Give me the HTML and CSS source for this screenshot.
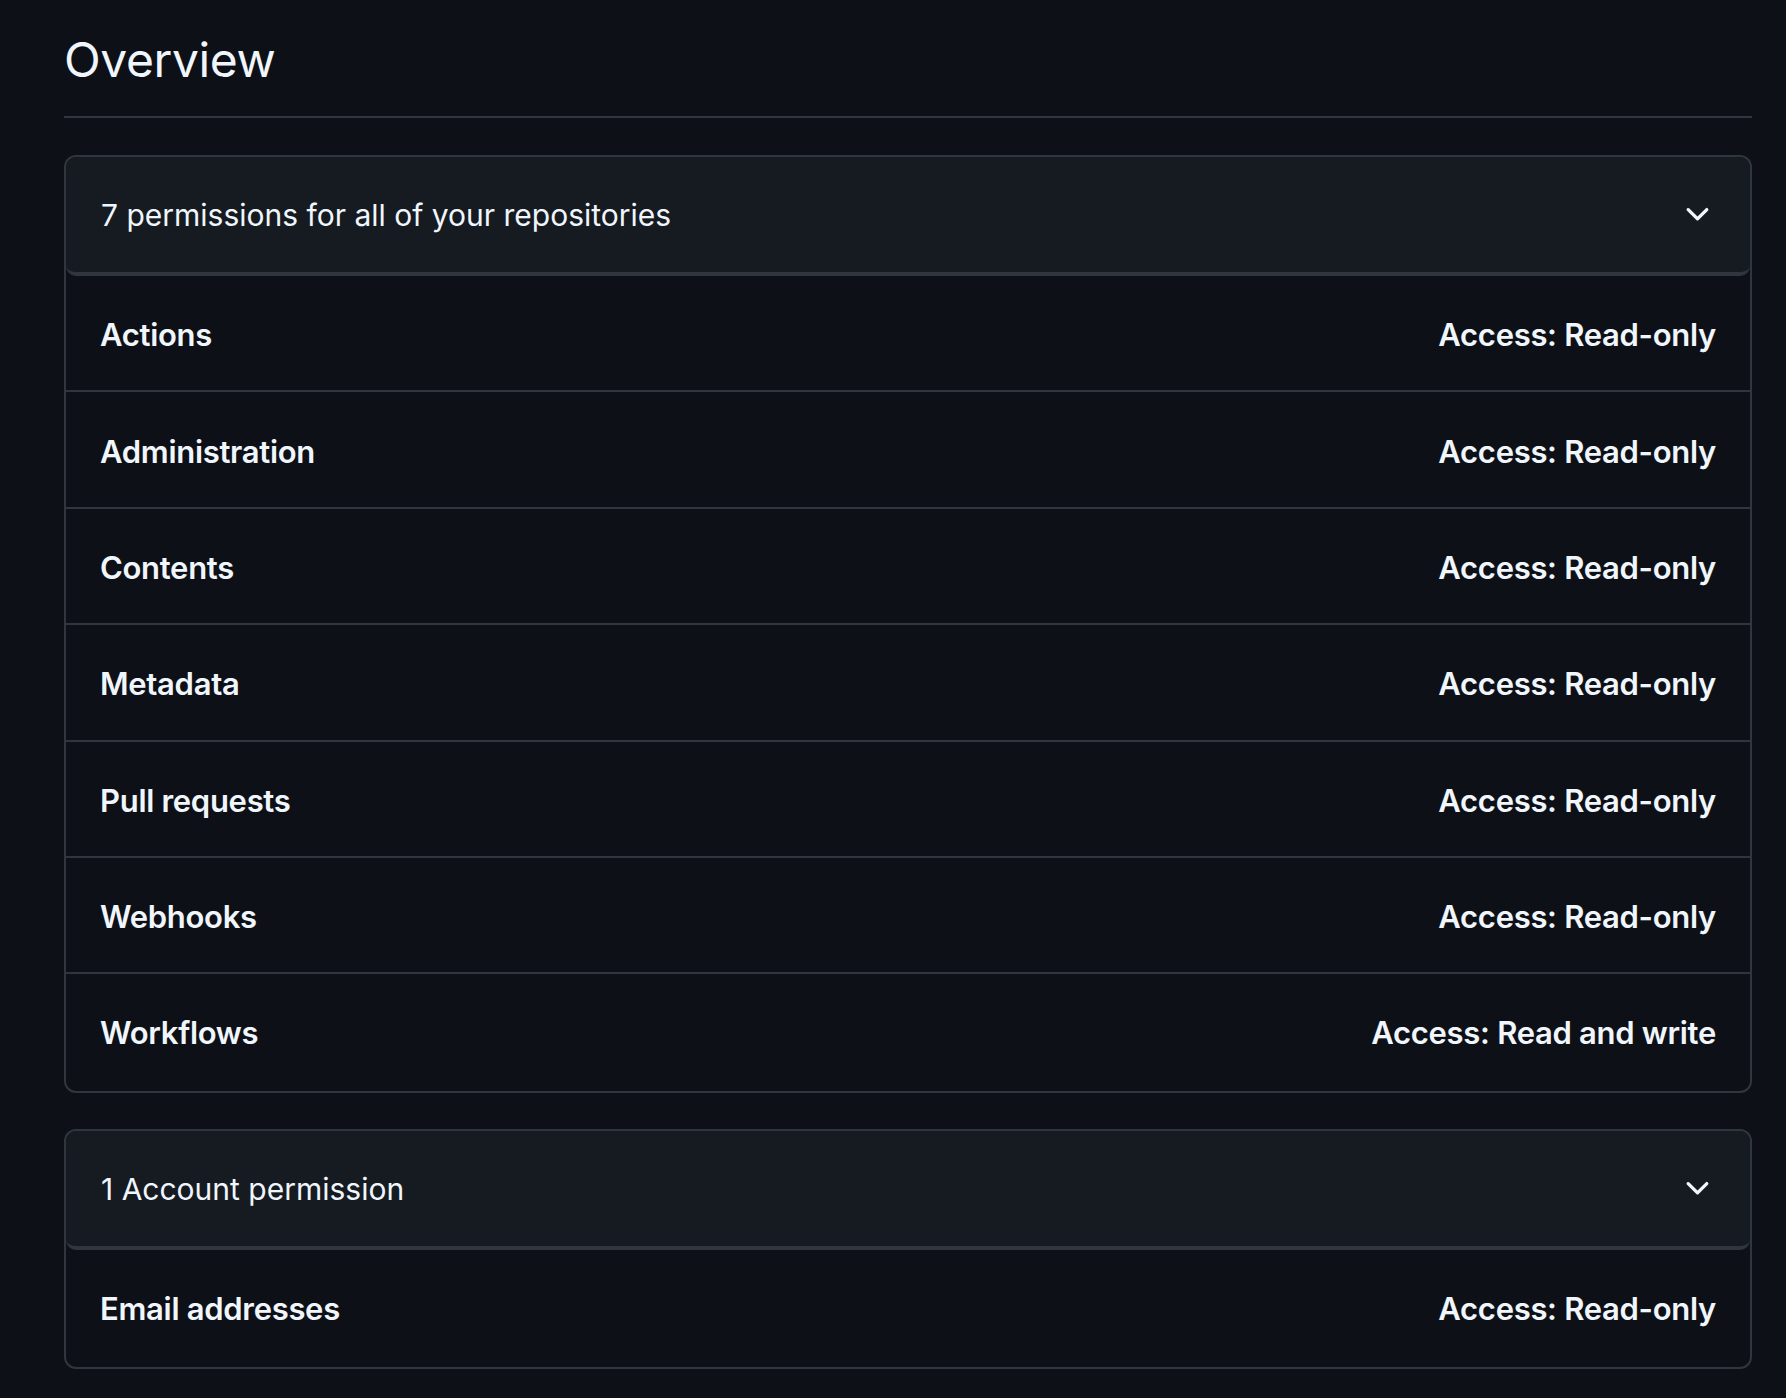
FILE: index.html
```html
<!DOCTYPE html>
<html lang="en">
<head>
<meta charset="utf-8">
<title>Overview</title>
<link rel="stylesheet" href="styles.css">
</head>
<body>
<main class="page">
  <div class="subhead">
    <h2 class="subhead-title">Overview</h2>
  </div>

  <section class="box">
    <div class="box-header">
      <span class="box-title">7 permissions for all of your repositories</span>
      <svg class="chevron" viewBox="0 0 16 16" aria-hidden="true"><path d="M12.78 5.22a.749.749 0 0 1 0 1.06l-4.25 4.25a.749.749 0 0 1-1.06 0L3.22 6.28a.749.749 0 0 1 .326-1.275.749.749 0 0 1 .734.215L8 8.939l3.72-3.719a.749.749 0 0 1 1.06 0Z"/></svg>
    </div>
    <ul class="box-list">
      <li class="box-row"><span>Actions</span><span>Access: Read-only</span></li>
      <li class="box-row"><span>Administration</span><span>Access: Read-only</span></li>
      <li class="box-row"><span>Contents</span><span>Access: Read-only</span></li>
      <li class="box-row"><span>Metadata</span><span>Access: Read-only</span></li>
      <li class="box-row"><span>Pull requests</span><span>Access: Read-only</span></li>
      <li class="box-row"><span>Webhooks</span><span>Access: Read-only</span></li>
      <li class="box-row"><span>Workflows</span><span>Access: Read and write</span></li>
    </ul>
  </section>

  <section class="box">
    <div class="box-header">
      <span class="box-title">1 Account permission</span>
      <svg class="chevron" viewBox="0 0 16 16" aria-hidden="true"><path d="M12.78 5.22a.749.749 0 0 1 0 1.06l-4.25 4.25a.749.749 0 0 1-1.06 0L3.22 6.28a.749.749 0 0 1 .326-1.275.749.749 0 0 1 .734.215L8 8.939l3.72-3.719a.749.749 0 0 1 1.06 0Z"/></svg>
    </div>
    <ul class="box-list">
      <li class="box-row"><span>Email addresses</span><span>Access: Read-only</span></li>
    </ul>
  </section>
</main>
</body>
</html>
```

FILE: styles.css
```css
html, body {
  margin: 0;
  padding: 0;
  background: #0d1117;
}

body {
  font-family: Inter, "Noto Sans", "Liberation Sans", sans-serif;
  color: #e6edf3;
  min-height: 1398px;
}

.page {
  padding: 0 34px 0 64px;
  display: flex;
  flex-direction: column;
}

.subhead {
  height: 116px;
  border-bottom: 2px solid #30363d;
  display: flex;
  align-items: flex-start;
  margin-bottom: 37px;
}

.subhead-title {
  margin: 0;
  padding-top: 31px;
  font-size: 48px;
  font-weight: 400;
  line-height: 1.2;
  letter-spacing: -0.4px;
  color: #f0f6fc;
}

.box {
  border: 2px solid #30363d;
  border-radius: 12px;
  margin-bottom: 36px;
  overflow: hidden;
}

.box-header {
  height: 115px;
  background: #161b22;
  border-radius: 10px;
  display: flex;
  align-items: center;
  justify-content: space-between;
  padding: 0 35px 0 35px;
  border-bottom: 4px solid #30363d;
}

.box-title {
  font-size: 30px;
  font-weight: 400;
  color: #f0f6fc;
}

.chevron {
  width: 35px;
  height: 35px;
  fill: #f0f6fc;
}

.box-list {
  list-style: none;
  margin: 0;
  padding: 0;
}

.box-row {
  height: 111.4px;
  display: flex;
  align-items: center;
  justify-content: space-between;
  padding: 3px 34px 0 34px;
  box-sizing: content-box;
  border-top: 2px solid #30363d;
  font-size: 31px;
  font-weight: 600;
  letter-spacing: -0.3px;
  color: #f0f6fc;
}

.box-row:first-child {
  border-top: 0;
}

.box-row:last-child {
  height: 117px;
  padding-top: 0;
}
```
